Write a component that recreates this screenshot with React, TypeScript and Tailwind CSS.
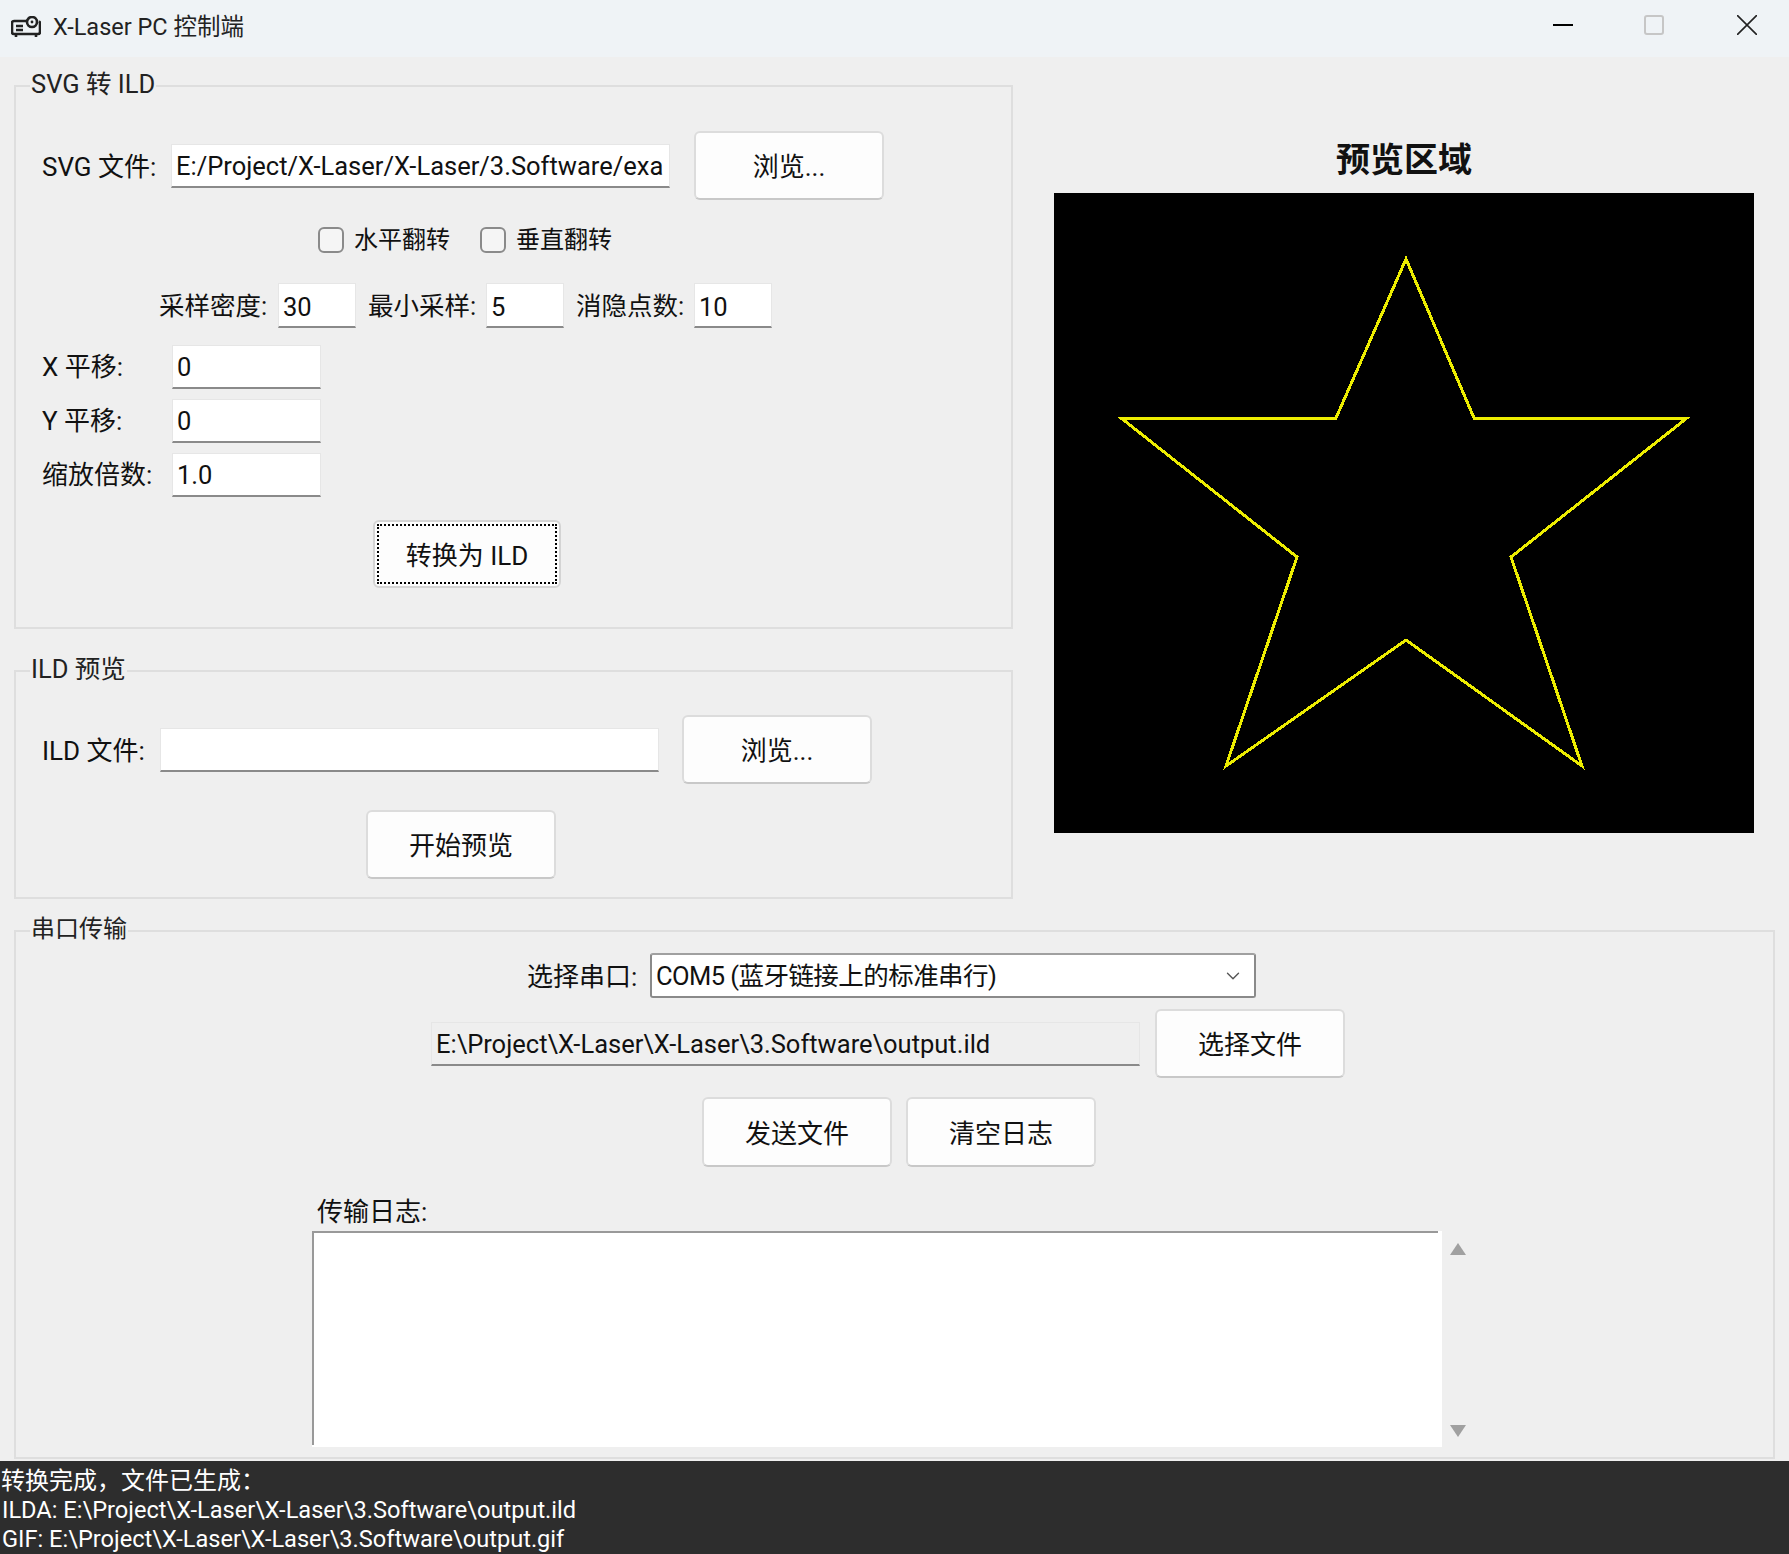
import { ChevronDown } from "lucide-react";
import type { ReactNode } from "react";

const STAR = "352,66 282,225 67,225 243,364 172,573 352,447 528,573 457,364 633,225 420,225";

function Group({ title, className, titleClass = "text-[25.5px]", children }: { title: string; className: string; titleClass?: string; children: ReactNode }) {
  return (
    <div className={`relative border-2 border-[#dedede] ${className}`}>
      {/* 标题压在边框上 */}
      <span className={`absolute left-[14px] top-[-19px] bg-[#efefef] px-[1px] leading-[32px] text-[#222] ${titleClass}`}>{title}</span>
      {children}
    </div>
  );
}

function Btn({ children, className = "" }: { children: ReactNode; className?: string }) {
  return (
    <button className={`flex h-[69px] w-[190px] shrink-0 items-center justify-center rounded-[6px] border-2 border-[#dcdcdc] border-b-[#c8c8c8] bg-[#fdfdfd] pt-[4px] text-[26px] text-[#111] ${className}`}>
      {children}
    </button>
  );
}

function Field({ value = "", className = "" }: { value?: string; className?: string }) {
  return (
    <input
      readOnly
      value={value}
      className={`h-[44px] shrink-0 border border-[#e6e6e6] border-b-2 border-b-[#8a8a8a] bg-white px-[4px] text-[25.5px] text-[#111] outline-none ${className}`}
    />
  );
}

function Check({ label }: { label: string }) {
  return (
    <div className="flex items-center gap-[10px]">
      <span className="h-[26px] w-[26px] rounded-[6px] border-2 border-[#8a8a8a] bg-[#f5f5f5]" />
      <span className="leading-[26px]">{label}</span>
    </div>
  );
}

function NumRow({ label, value }: { label: string; value: string }) {
  return (
    <div className="flex items-center">
      <span className="w-[130px] text-[26px]">{label}</span>
      <Field value={value} className="w-[149px]" />
    </div>
  );
}

export default function App() {
  return (
    <div className="flex h-[1554px] w-full flex-col overflow-hidden bg-[#efefef] font-['Roboto','Noto_Sans_CJK_SC',sans-serif] text-[24px] text-[#111]">
      {/* 标题栏 */}
      <div className="flex h-[57px] shrink-0 items-center justify-between bg-[#eff3f6] pl-[11px] pr-[32px]">
        <div className="flex items-center gap-[12px]">
          <svg className="relative top-[-2px]" width="30" height="22" viewBox="0 0 30 22" fill="none" stroke="#222" strokeWidth="2.6">
            <path d="M16 5H3a2 2 0 0 0-2 2v9a2 2 0 0 0 2 2h24a2 2 0 0 0 2-2V7a2 2 0 0 0-1-1.7" />
            <circle cx="21" cy="6" r="5" />
            <circle cx="21" cy="6" r="1.4" fill="#222" stroke="none" />
            <path d="M5 10h7M5 14h7M5 18v3M25 18v3" />
          </svg>
          <span className="relative top-[-1px] text-[23.5px] text-[#222]">X-Laser PC 控制端</span>
        </div>
        <div className="flex items-center pb-[7px]">
          <span className="h-[2px] w-[20px] bg-black" />
          <span className="ml-[71px] h-[20px] w-[20px] rounded-[3px] border-2 border-[#c6c6c6]" />
          <svg className="ml-[73px]" width="20" height="20" viewBox="0 0 20 20" stroke="#222" strokeWidth="1.6">
            <path d="M0 0L20 20M20 0L0 20" />
          </svg>
        </div>
      </div>

      <div className="flex flex-1 flex-col pl-[14px]">
        <div className="flex">
          {/* 左列 */}
          <div className="w-[999px] shrink-0">
            <Group title="SVG 转 ILD" className="mt-[28px] h-[544px] pl-[26px] pt-[44px]">
              <div className="flex items-center">
                <span className="w-[129px] pt-[4px] text-[26px]">SVG 文件:</span>
                <Field value="E:/Project/X-Laser/X-Laser/3.Software/exa" className="w-[499px] pt-[2px]" />
                <Btn className="ml-[24px]">浏览...</Btn>
              </div>
              <div className="ml-[276px] mt-[27px] flex gap-[30px]">
                <Check label="水平翻转" />
                <Check label="垂直翻转" />
              </div>
              <div className="ml-[117px] mt-[30px] flex items-center text-[25.5px]">
                <span className="w-[119px] pt-[2px]">采样密度:</span>
                <Field value="30" className="h-[45px] w-[78px] pt-[3px]" />
                <span className="ml-[12px] w-[118px] pt-[2px]">最小采样:</span>
                <Field value="5" className="h-[45px] w-[78px] pt-[3px]" />
                <span className="ml-[12px] w-[118px] pt-[2px]">消隐点数:</span>
                <Field value="10" className="h-[45px] w-[78px] pt-[3px]" />
              </div>
              <div className="mt-[17px] flex flex-col gap-[10px]">
                <NumRow label="X 平移:" value="0" />
                <NumRow label="Y 平移:" value="0" />
                <NumRow label="缩放倍数:" value="1.0" />
              </div>
              <button className="ml-[331px] mt-[23px] flex h-[68px] w-[188px] items-center justify-center rounded-[6px] border-2 border-[#d4d4d4] bg-[#fdfdfd] p-[2px] text-[26px]">
                <span className="flex h-full w-full items-center justify-center border-2 border-dotted border-black pt-[4px]">转换为 ILD</span>
              </button>
            </Group>

            <Group title="ILD 预览" className="mt-[41px] h-[229px] pl-[26px] pt-[43px]">
              <div className="flex items-center">
                <span className="w-[118px] pt-[4px] text-[26px]">ILD 文件:</span>
                <Field className="w-[499px]" />
                <Btn className="ml-[23px]">浏览...</Btn>
              </div>
              <Btn className="ml-[324px] mt-[26px]">开始预览</Btn>
            </Group>
          </div>

          {/* 预览区域 */}
          <div className="ml-[41px] w-[700px] shrink-0 pt-[80px]">
            <div className="mb-[8px] text-center font-['Liberation_Serif','Noto_Sans_CJK_SC',serif] text-[34px] font-bold leading-[48px] text-[#111]">预览区域</div>
            <svg className="block bg-black" width="700" height="640" viewBox="0 0 700 640">
              <polygon points={STAR} fill="none" stroke="#eded00" strokeWidth="3" strokeLinejoin="miter" shapeRendering="crispEdges" />
            </svg>
          </div>
        </div>

        <Group title="串口传输" titleClass="text-[24px]" className="mt-[31px] h-[529px] w-[1761px]">
          <div className="ml-[511px] mt-[21px] flex items-center">
            <span className="w-[123px] pt-[4px] text-[26px]">选择串口:</span>
            <div className="flex h-[45px] w-[606px] items-center justify-between rounded-[3px] border-2 border-[#8a8a8a] border-t-[#a0a0a0] bg-white pl-[4px] pr-[10px]">
              <span className="pt-[2px] text-[25.5px] tracking-[-0.55px]">COM5 (蓝牙链接上的标准串行)</span>
              <ChevronDown size={22} strokeWidth={1.5} color="#555" />
            </div>
          </div>
          <div className="ml-[415px] mt-[11px] flex items-center gap-[15px]">
            <Field value="E:\Project\X-Laser\X-Laser\3.Software\output.ild" className="w-[709px] !bg-[#efefef] pt-[2px]" />
            <Btn>选择文件</Btn>
          </div>
          <div className="ml-[686px] mt-[19px] flex gap-[14px]">
            <Btn className="h-[70px]">发送文件</Btn>
            <Btn className="h-[70px]">清空日志</Btn>
          </div>
          <div className="ml-[301px] mt-[30px] h-[34px] text-[26px] leading-[30px]">传输日志:</div>
          <div className="ml-[296px] flex h-[216px]">
            <div className="h-full w-[1130px] bg-white pb-[2px] pr-[4px]">
              <div className="h-full border-l-2 border-t-2 border-[#999]" />
            </div>
            <div className="ml-[8px] flex flex-col justify-between pb-[10px] pt-[12px]">
              <svg width="16" height="12" viewBox="0 0 16 12"><path d="M8 0L16 12H0Z" fill="#a0a0a0" /></svg>
              <svg width="16" height="12" viewBox="0 0 16 12"><path d="M0 0H16L8 12Z" fill="#a0a0a0" /></svg>
            </div>
          </div>
        </Group>

        {/* 状态栏 */}
        <div className="-ml-[14px] mt-[2px] flex-1 bg-[#2d2d2d] pl-[1px] pt-[6px] text-[23.6px] leading-[29px] text-white">
          <div className="text-[24px]">转换完成，文件已生成：</div>
          <div className="pl-[1px]">ILDA: E:\Project\X-Laser\X-Laser\3.Software\output.ild</div>
          <div className="pl-[1px]">GIF: E:\Project\X-Laser\X-Laser\3.Software\output.gif</div>
        </div>
      </div>
    </div>
  );
}
